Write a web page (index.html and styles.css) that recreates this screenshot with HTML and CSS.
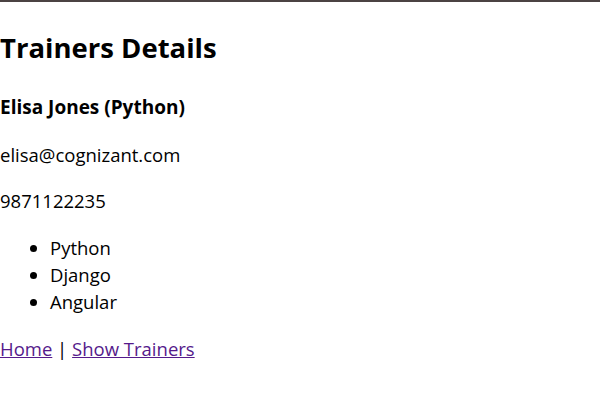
FILE: index.html
```html
<!DOCTYPE html>
<html>
<head>
<meta charset="utf-8">
<link rel="stylesheet" href="styles.css">
</head>
<body>
<div class="topbar"></div>
<h1 class="title">Trainers Details</h1>
<h3 class="name">Elisa Jones (Python)</h3>
<p class="info">elisa@cognizant.com</p>
<p class="info">9871122235</p>
<ul class="skills">
<li>Python</li>
<li>Django</li>
<li>Angular</li>
</ul>
<p class="nav"><a href="#" class="link">Home</a> | <a href="#" class="link">Show Trainers</a></p>
</body>
</html>
```
FILE: styles.css
```css
html, body {
  margin: 0;
  padding: 0;
  background: #ffffff;
}
body {
  font-family: "Open Sans", "Noto Sans", sans-serif;
  font-size: 18.5px;
  line-height: 27px;
  color: #000;
}
.topbar {
  height: 2px;
  background: #4b4343;
}
.title {
  font-size: 27.5px;
  line-height: 40px;
  font-weight: 700;
  margin: 26px 0 0;
}
.name {
  font-size: 19px;
  font-weight: 700;
  margin: 26px 0 0;
}
.info {
  margin: 20px 0 0;
}
.info + .info {
  margin-top: 19px;
}
.skills {
  margin: 20px 0 0;
  padding-left: 50px;
}
.nav {
  margin: 20px 0 0;
}
.link {
  color: #551a8b;
}
```
